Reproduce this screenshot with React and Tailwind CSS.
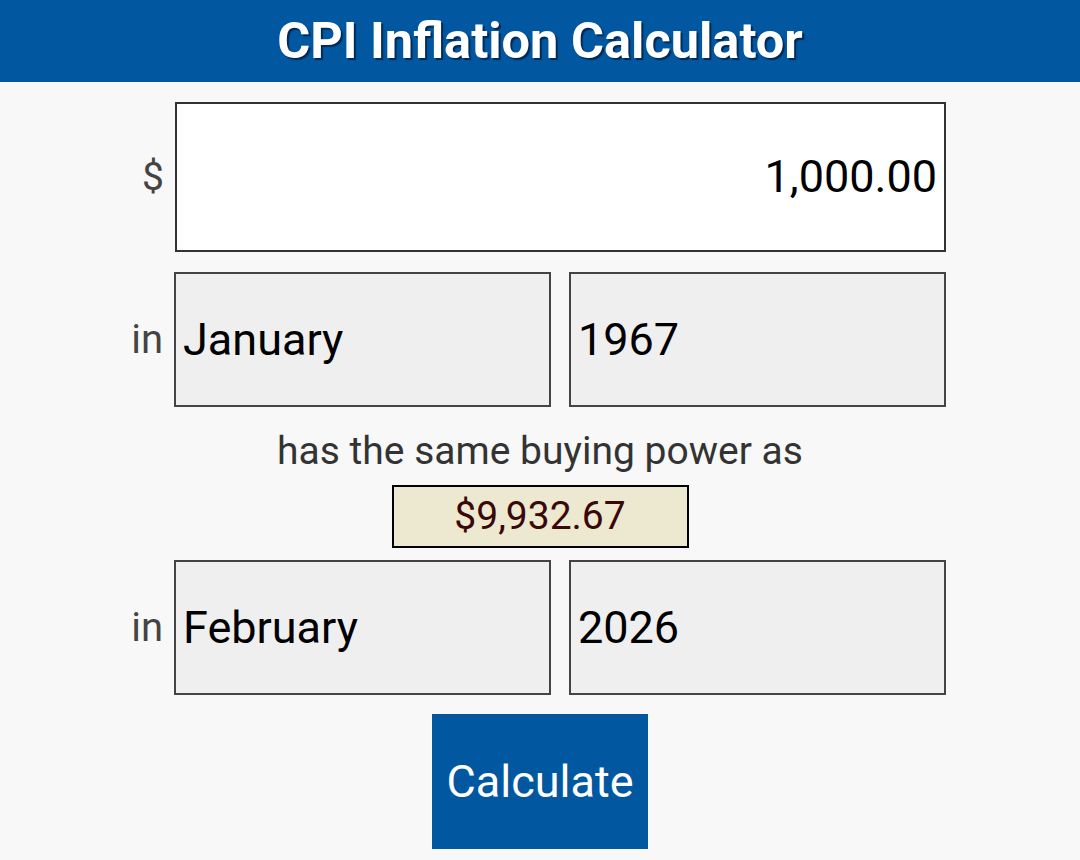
import React from "react";

export default function App() {
  const font = { fontFamily: "Roboto, 'Noto Sans', sans-serif" };
  return (
    <div className="w-[1080px] h-[860px] bg-[#f8f8f8] overflow-hidden" style={font}>
      <div className="h-[82px] bg-[#0157a0] flex items-center justify-center">
        <h1 className="text-white font-bold text-[50.5px] leading-none [text-shadow:2px_2px_1px_#002a55]">
          CPI Inflation Calculator
        </h1>
      </div>

      <div className="flex items-center mt-[20px]">
        <div className="w-[175px] pr-[11px] text-right text-[39px] text-[#444]">$</div>
        <div className="w-[771px] h-[150px] bg-white border-2 border-[#333] flex items-center justify-end pr-[7px] text-[45px] text-black">
          1,000.00
        </div>
      </div>

      <div className="flex items-center mt-[20px]">
        <div className="w-[174px] pr-[11px] text-right text-[40px] text-[#444]">in</div>
        <div className="flex gap-[18px]">
          <div className="w-[377px] h-[135px] bg-[#efefef] border-2 border-[#444] flex items-center pl-[7px] text-[45px] text-black">
            January
          </div>
          <div className="w-[377px] h-[135px] bg-[#efefef] border-2 border-[#444] flex items-center pl-[7px] text-[45px] text-black">
            1967
          </div>
        </div>
      </div>

      <div className="text-center text-[39px] text-[#333] mt-[20px] leading-[48px]">
        has the same buying power as
      </div>

      <div className="flex justify-center mt-[10px]">
        <div className="w-[297px] h-[63px] bg-[#ede8d0] border-2 border-black flex items-center justify-center text-[39px] text-[#3a0808]">
          $9,932.67
        </div>
      </div>

      <div className="flex items-center mt-[12px]">
        <div className="w-[174px] pr-[11px] text-right text-[40px] text-[#444]">in</div>
        <div className="flex gap-[18px]">
          <div className="w-[377px] h-[135px] bg-[#efefef] border-2 border-[#444] flex items-center pl-[7px] text-[45px] text-black">
            February
          </div>
          <div className="w-[377px] h-[135px] bg-[#efefef] border-2 border-[#444] flex items-center pl-[7px] text-[45px] text-black">
            2026
          </div>
        </div>
      </div>

      <div className="flex justify-center mt-[19px]">
        <div className="w-[216px] h-[135px] bg-[#0157a0] flex items-center justify-center text-white text-[45px]">
          Calculate
        </div>
      </div>
    </div>
  );
}
